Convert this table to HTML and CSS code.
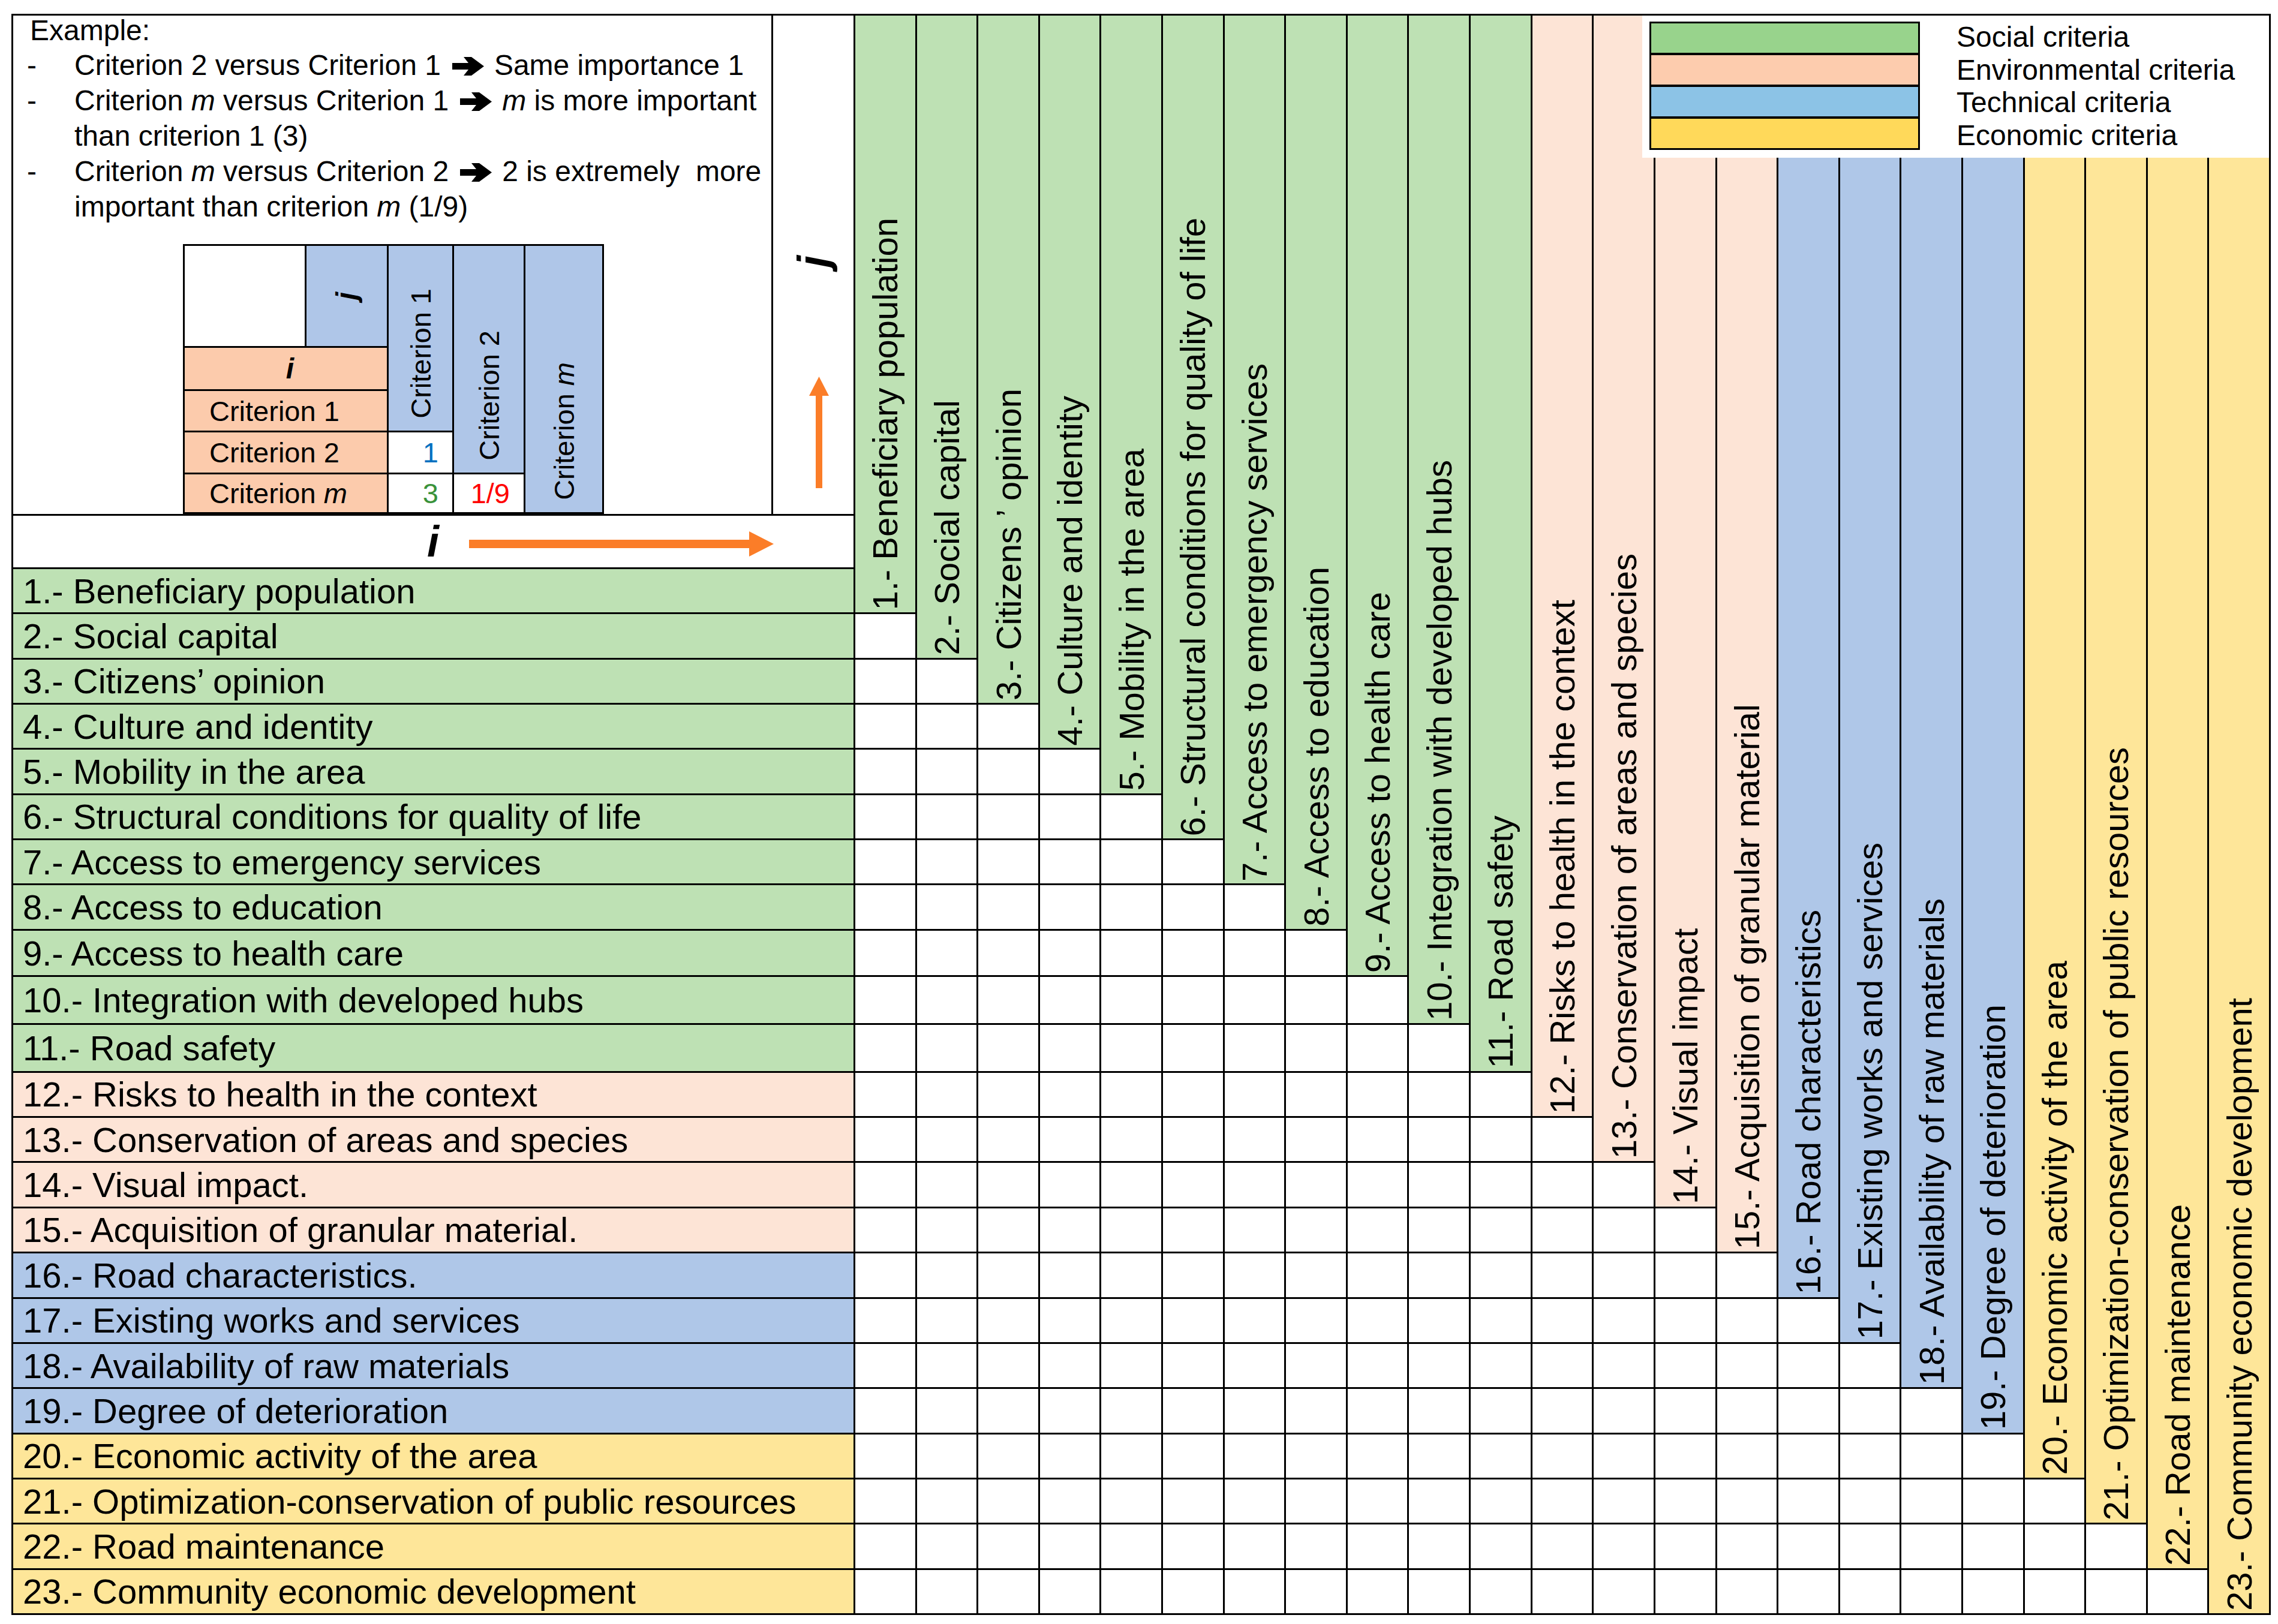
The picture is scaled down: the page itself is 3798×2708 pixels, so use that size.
FILE: index.html
```html
<!DOCTYPE html>
<html lang="en">
<head>
<meta charset="utf-8">
<title>Pairwise comparison matrix of criteria</title>
<link rel="stylesheet" href="styles.css">
</head>
<body>
<div class="matrix">
  <div class="corner">
    <div class="example">
      <p class="ex-title">Example:</p>
      <ul class="ex-list">
        <li><span class="dash">-</span><span class="ex-txt">Criterion 2 versus Criterion 1<svg class="arr" width="53" height="31" viewBox="0 0 53 31"><polygon points="0,10 27,10 19,0 32,0 53,15.5 32,31 19,31 27,21 0,21" fill="#000"/></svg>Same importance 1</span></li>
        <li><span class="dash">-</span><span class="ex-txt">Criterion <em>m</em> versus Criterion 1<svg class="arr" width="53" height="31" viewBox="0 0 53 31"><polygon points="0,10 27,10 19,0 32,0 53,15.5 32,31 19,31 27,21 0,21" fill="#000"/></svg><em>m</em> is more important<br>than criterion 1 (3)</span></li>
        <li><span class="dash">-</span><span class="ex-txt">Criterion <em>m</em> versus Criterion 2<svg class="arr" width="53" height="31" viewBox="0 0 53 31"><polygon points="0,10 27,10 19,0 32,0 53,15.5 32,31 19,31 27,21 0,21" fill="#000"/></svg>2 is extremely &nbsp;more<br>important than criterion <em>m</em> (1/9)</span></li>
      </ul>
      <div class="mini">
        <div class="m-blank"></div>
        <div class="m-j"><span class="rot mj">j</span></div>
        <div class="m-i"><em class="mi">i</em></div>
        <div class="m-r1 m-lab"><span>Criterion 1</span></div>
        <div class="m-r2 m-lab"><span>Criterion 2</span></div>
        <div class="m-r3 m-lab"><span>Criterion <em>m</em></span></div>
        <div class="m-c1 m-col"><span class="rot">Criterion 1</span></div>
        <div class="m-c2 m-col"><span class="rot">Criterion 2</span></div>
        <div class="m-c3 m-col"><span class="rot">Criterion <em>m</em></span></div>
        <div class="m-v1 m-val blue-t">1</div>
        <div class="m-v2 m-val green-t">3</div>
        <div class="m-v3 m-val red-t">1/9</div>
      </div>
    </div>
    <div class="jcell">
      <span class="rot jglyph">j</span>
      <svg class="uarrow" width="33" height="186" viewBox="0 0 33 186"><polygon points="11,32 0,32 16.5,0 33,32 22,32 22,186 11,186" fill="#fb7d28"/></svg>
    </div>
    <div class="irow">
      <em class="iglyph">i</em>
      <svg class="rarrow" width="508" height="42" viewBox="0 0 508 42"><polygon points="0,14 467,14 467,0 508,21 467,42 467,28 0,28" fill="#fb7d28"/></svg>
    </div>
  </div>

  <div class="ch c1 g"><span>1.- Beneficiary population</span></div>
  <div class="ch c2 g"><span>2.- Social capital</span></div>
  <div class="ch c3 g"><span>3.- Citizens ’ opinion</span></div>
  <div class="ch c4 g"><span>4.- Culture and identity</span></div>
  <div class="ch c5 g"><span>5.- Mobility in the area</span></div>
  <div class="ch c6 g"><span>6.- Structural conditions for quality of life</span></div>
  <div class="ch c7 g"><span>7.- Access to emergency services</span></div>
  <div class="ch c8 g"><span>8.- Access to education</span></div>
  <div class="ch c9 g"><span>9.- Access to health care</span></div>
  <div class="ch c10 g"><span>10.- Integration with developed hubs</span></div>
  <div class="ch c11 g"><span>11.- Road safety</span></div>
  <div class="ch c12 p"><span>12.- Risks to health in the context</span></div>
  <div class="ch c13 p"><span>13.- Conservation of areas and species</span></div>
  <div class="ch c14 p"><span>14.- Visual impact</span></div>
  <div class="ch c15 p"><span>15.- Acquisition of granular material</span></div>
  <div class="ch c16 b"><span>16.- Road characteristics</span></div>
  <div class="ch c17 b"><span>17.- Existing works and services</span></div>
  <div class="ch c18 b"><span>18.- Availability of raw materials</span></div>
  <div class="ch c19 b"><span>19.- Degree of deterioration</span></div>
  <div class="ch c20 y"><span>20.- Economic activity of the area</span></div>
  <div class="ch c21 y"><span>21.- Optimization-conservation of public resources</span></div>
  <div class="ch c22 y"><span>22.- Road maintenance</span></div>
  <div class="ch c23 y"><span>23.- Community economic development</span></div>

  <div class="rl g">1.- Beneficiary population</div>
  <div class="rl g">2.- Social capital</div>
  <div class="rl g">3.- Citizens’ opinion</div>
  <div class="rl g">4.- Culture and identity</div>
  <div class="rl g">5.- Mobility in the area</div>
  <div class="rl g">6.- Structural conditions for quality of life</div>
  <div class="rl g">7.- Access to emergency services</div>
  <div class="rl g">8.- Access to education</div>
  <div class="rl g">9.- Access to health care</div>
  <div class="rl g">10.- Integration with developed hubs</div>
  <div class="rl g">11.- Road safety</div>
  <div class="rl p">12.- Risks to health in the context</div>
  <div class="rl p">13.- Conservation of areas and species</div>
  <div class="rl p">14.- Visual impact.</div>
  <div class="rl p">15.- Acquisition of granular material.</div>
  <div class="rl b">16.- Road characteristics.</div>
  <div class="rl b">17.- Existing works and services</div>
  <div class="rl b">18.- Availability of raw materials</div>
  <div class="rl b">19.- Degree of deterioration</div>
  <div class="rl y">20.- Economic activity of the area</div>
  <div class="rl y">21.- Optimization-conservation of public resources</div>
  <div class="rl y">22.- Road maintenance</div>
  <div class="rl y">23.- Community economic development</div>

  <i class="w"></i>
  <i class="w"></i><i class="w"></i>
  <i class="w"></i><i class="w"></i><i class="w"></i>
  <i class="w"></i><i class="w"></i><i class="w"></i><i class="w"></i>
  <i class="w"></i><i class="w"></i><i class="w"></i><i class="w"></i><i class="w"></i>
  <i class="w"></i><i class="w"></i><i class="w"></i><i class="w"></i><i class="w"></i><i class="w"></i>
  <i class="w"></i><i class="w"></i><i class="w"></i><i class="w"></i><i class="w"></i><i class="w"></i><i class="w"></i>
  <i class="w"></i><i class="w"></i><i class="w"></i><i class="w"></i><i class="w"></i><i class="w"></i><i class="w"></i><i class="w"></i>
  <i class="w"></i><i class="w"></i><i class="w"></i><i class="w"></i><i class="w"></i><i class="w"></i><i class="w"></i><i class="w"></i><i class="w"></i>
  <i class="w"></i><i class="w"></i><i class="w"></i><i class="w"></i><i class="w"></i><i class="w"></i><i class="w"></i><i class="w"></i><i class="w"></i><i class="w"></i>
  <i class="w"></i><i class="w"></i><i class="w"></i><i class="w"></i><i class="w"></i><i class="w"></i><i class="w"></i><i class="w"></i><i class="w"></i><i class="w"></i><i class="w"></i>
  <i class="w"></i><i class="w"></i><i class="w"></i><i class="w"></i><i class="w"></i><i class="w"></i><i class="w"></i><i class="w"></i><i class="w"></i><i class="w"></i><i class="w"></i><i class="w"></i>
  <i class="w"></i><i class="w"></i><i class="w"></i><i class="w"></i><i class="w"></i><i class="w"></i><i class="w"></i><i class="w"></i><i class="w"></i><i class="w"></i><i class="w"></i><i class="w"></i><i class="w"></i>
  <i class="w"></i><i class="w"></i><i class="w"></i><i class="w"></i><i class="w"></i><i class="w"></i><i class="w"></i><i class="w"></i><i class="w"></i><i class="w"></i><i class="w"></i><i class="w"></i><i class="w"></i><i class="w"></i>
  <i class="w"></i><i class="w"></i><i class="w"></i><i class="w"></i><i class="w"></i><i class="w"></i><i class="w"></i><i class="w"></i><i class="w"></i><i class="w"></i><i class="w"></i><i class="w"></i><i class="w"></i><i class="w"></i><i class="w"></i>
  <i class="w"></i><i class="w"></i><i class="w"></i><i class="w"></i><i class="w"></i><i class="w"></i><i class="w"></i><i class="w"></i><i class="w"></i><i class="w"></i><i class="w"></i><i class="w"></i><i class="w"></i><i class="w"></i><i class="w"></i><i class="w"></i>
  <i class="w"></i><i class="w"></i><i class="w"></i><i class="w"></i><i class="w"></i><i class="w"></i><i class="w"></i><i class="w"></i><i class="w"></i><i class="w"></i><i class="w"></i><i class="w"></i><i class="w"></i><i class="w"></i><i class="w"></i><i class="w"></i><i class="w"></i>
  <i class="w"></i><i class="w"></i><i class="w"></i><i class="w"></i><i class="w"></i><i class="w"></i><i class="w"></i><i class="w"></i><i class="w"></i><i class="w"></i><i class="w"></i><i class="w"></i><i class="w"></i><i class="w"></i><i class="w"></i><i class="w"></i><i class="w"></i><i class="w"></i>
  <i class="w"></i><i class="w"></i><i class="w"></i><i class="w"></i><i class="w"></i><i class="w"></i><i class="w"></i><i class="w"></i><i class="w"></i><i class="w"></i><i class="w"></i><i class="w"></i><i class="w"></i><i class="w"></i><i class="w"></i><i class="w"></i><i class="w"></i><i class="w"></i><i class="w"></i>
  <i class="w"></i><i class="w"></i><i class="w"></i><i class="w"></i><i class="w"></i><i class="w"></i><i class="w"></i><i class="w"></i><i class="w"></i><i class="w"></i><i class="w"></i><i class="w"></i><i class="w"></i><i class="w"></i><i class="w"></i><i class="w"></i><i class="w"></i><i class="w"></i><i class="w"></i><i class="w"></i>
  <i class="w"></i><i class="w"></i><i class="w"></i><i class="w"></i><i class="w"></i><i class="w"></i><i class="w"></i><i class="w"></i><i class="w"></i><i class="w"></i><i class="w"></i><i class="w"></i><i class="w"></i><i class="w"></i><i class="w"></i><i class="w"></i><i class="w"></i><i class="w"></i><i class="w"></i><i class="w"></i><i class="w"></i>
  <i class="w"></i><i class="w"></i><i class="w"></i><i class="w"></i><i class="w"></i><i class="w"></i><i class="w"></i><i class="w"></i><i class="w"></i><i class="w"></i><i class="w"></i><i class="w"></i><i class="w"></i><i class="w"></i><i class="w"></i><i class="w"></i><i class="w"></i><i class="w"></i><i class="w"></i><i class="w"></i><i class="w"></i><i class="w"></i>

  <div class="legend">
    <div class="sw-stack">
      <div class="sw sw-g"></div>
      <div class="sw sw-p"></div>
      <div class="sw sw-b"></div>
      <div class="sw sw-y"></div>
    </div>
    <div class="leg-text">
      <div>Social criteria</div>
      <div>Environmental criteria</div>
      <div>Technical criteria</div>
      <div>Economic criteria</div>
    </div>
  </div>
</div>
</body>
</html>
```
FILE: styles.css
```css
html, body {
  margin: 0;
  padding: 0;
  background: #fff;
}
body {
  width: 3798px;
  height: 2708px;
  font-family: "Liberation Sans", Arial, sans-serif;
  color: #000;
}

.matrix {
  position: relative;
  box-sizing: border-box;
  width: 3767px;
  height: 2670px;
  margin: 23px 0 0 19px;
  border: 3px solid #000;
  background: #000;
  display: grid;
  grid-template-columns: 1401px repeat(23, 1fr);
  grid-template-rows: 920px repeat(8, 1fr) 1.03fr 1.06fr 1.06fr repeat(12, 1fr);
  gap: 3px;
  grid-auto-flow: row dense;
}

.g { background: #bee1b4; }
.p { background: #fde4d6; }
.b { background: #afc7e8; }
.y { background: #fee699; }
.w { background: #fff; }

/* ---------- top-left corner ---------- */
.corner {
  grid-column: 1;
  grid-row: 1;
  display: grid;
  grid-template-columns: 1264px 1fr;
  grid-template-rows: 831px 1fr;
  gap: 3px;
  background: #000;
}
.example {
  background: #fff;
  display: flex;
  flex-direction: column;
  padding-left: 23px;
  font-size: 48px;
  white-space: nowrap;
}
.ex-title {
  margin: 0 0 0 5px;
  line-height: 50px;
}
.ex-list {
  list-style: none;
  margin: 3px 0 0;
  padding: 0;
  line-height: 59px;
}
.ex-list li {
  display: flex;
}
.dash {
  flex: none;
  width: 79px;
}
.arr {
  display: inline-block;
  vertical-align: -1px;
  margin: 0 17px 0 19px;
}

.rot {
  writing-mode: vertical-rl;
  transform: rotate(180deg);
  white-space: nowrap;
}

.mini {
  margin-top: auto;
  margin-left: 260px;
  width: max-content;
  display: grid;
  grid-template-columns: 200px 134px 106px 116px 128px;
  grid-template-rows: 167px 69px 66px 67px 63px;
  gap: 3px;
  border: 3px solid #000;
  background: #000;
  font-size: 47px;
}
.m-blank { grid-column: 1; grid-row: 1; background: #fff; }
.m-j {
  grid-column: 2; grid-row: 1;
  background: #afc6e8;
  display: flex; align-items: center; justify-content: center;
}
.mj { font-style: italic; font-weight: bold; font-size: 48px; line-height: 1; }
.m-i {
  grid-column: 1 / 3; grid-row: 2;
  background: #fccbac;
  display: flex; align-items: center; justify-content: center;
}
.mi { font-weight: bold; font-size: 48px; padding-left: 14px; }
.m-lab {
  background: #fccbac;
  display: flex; align-items: center;
  padding-left: 41px;
}
.m-r1 { grid-column: 1 / 3; grid-row: 3; }
.m-r2 { grid-column: 1 / 3; grid-row: 4; }
.m-r3 { grid-column: 1 / 3; grid-row: 5; }
.m-col {
  background: #afc6e8;
  display: flex; align-items: flex-end; justify-content: center;
}
.m-col .rot { padding-top: 20px; }
.m-c1 { grid-column: 3; grid-row: 1 / 4; }
.m-c2 { grid-column: 4; grid-row: 1 / 5; }
.m-c3 { grid-column: 5; grid-row: 1 / 6; }
.m-val {
  background: #fff;
  display: flex; align-items: center; justify-content: flex-end;
  padding-right: 23px;
}
.m-v1 { grid-column: 3; grid-row: 4; }
.m-v2 { grid-column: 3; grid-row: 5; }
.m-v3 { grid-column: 4; grid-row: 5; }
.blue-t { color: #0070c0; }
.green-t { color: #3a923a; }
.red-t { color: #ff0000; }

.jcell {
  background: #fff;
  display: flex;
  flex-direction: column;
  align-items: center;
}
.jglyph {
  font-style: italic;
  font-weight: bold;
  font-size: 72px;
  line-height: 1;
  margin-top: 400px;
}
.uarrow {
  display: block;
  margin-top: 182px;
  margin-left: 18px;
}
.irow {
  grid-column: 1 / 3;
  background: #fff;
  display: flex;
  align-items: center;
  padding-left: 690px;
}
.iglyph {
  font-weight: bold;
  font-size: 72px;
  line-height: 86px;
}
.rarrow {
  display: block;
  margin-left: 50px;
  margin-top: 8px;
}

/* ---------- column headers ---------- */
.ch {
  display: flex;
  align-items: flex-end;
  justify-content: center;
  font-size: 58px;
}
.ch span {
  writing-mode: vertical-rl;
  transform: rotate(180deg);
  white-space: nowrap;
  padding-top: 4px;
}
.c1 { grid-column: 2; grid-row: 1 / 3; }
.c2 { grid-column: 3; grid-row: 1 / 4; }
.c3 { grid-column: 4; grid-row: 1 / 5; }
.c4 { grid-column: 5; grid-row: 1 / 6; }
.c5 { grid-column: 6; grid-row: 1 / 7; }
.c6 { grid-column: 7; grid-row: 1 / 8; }
.c7 { grid-column: 8; grid-row: 1 / 9; }
.c8 { grid-column: 9; grid-row: 1 / 10; }
.c9 { grid-column: 10; grid-row: 1 / 11; }
.c10 { grid-column: 11; grid-row: 1 / 12; }
.c11 { grid-column: 12; grid-row: 1 / 13; }
.c12 { grid-column: 13; grid-row: 1 / 14; }
.c13 { grid-column: 14; grid-row: 1 / 15; }
.c14 { grid-column: 15; grid-row: 1 / 16; }
.c15 { grid-column: 16; grid-row: 1 / 17; }
.c16 { grid-column: 17; grid-row: 1 / 18; }
.c17 { grid-column: 18; grid-row: 1 / 19; }
.c18 { grid-column: 19; grid-row: 1 / 20; }
.c19 { grid-column: 20; grid-row: 1 / 21; }
.c20 { grid-column: 21; grid-row: 1 / 22; }
.c21 { grid-column: 22; grid-row: 1 / 23; }
.c22 { grid-column: 23; grid-row: 1 / 24; }
.c23 { grid-column: 24; grid-row: 1 / 25; }

/* ---------- row labels ---------- */
.rl {
  grid-column: 1;
  display: flex;
  align-items: center;
  padding-left: 16px;
  font-size: 58px;
  white-space: nowrap;
}

/* ---------- legend ---------- */
.legend {
  position: absolute;
  top: 0;
  left: 2716px;
  right: 0;
  height: 237px;
  box-sizing: border-box;
  padding: 10px 0 0 12px;
  background: #fff;
  display: flex;
  align-items: flex-start;
}
.sw-stack {
  box-sizing: border-box;
  width: 451px;
  border: 3px solid #000;
  background: #000;
  display: grid;
  grid-template-rows: repeat(4, 49px);
  row-gap: 4px;
}
.sw-g { background: #98d38c; }
.sw-p { background: #fdccae; }
.sw-b { background: #8cc3e6; }
.sw-y { background: #ffd95a; }
.leg-text {
  margin-left: 61px;
  margin-top: -1px;
  font-size: 48px;
  line-height: 54.5px;
  white-space: nowrap;
}
```
